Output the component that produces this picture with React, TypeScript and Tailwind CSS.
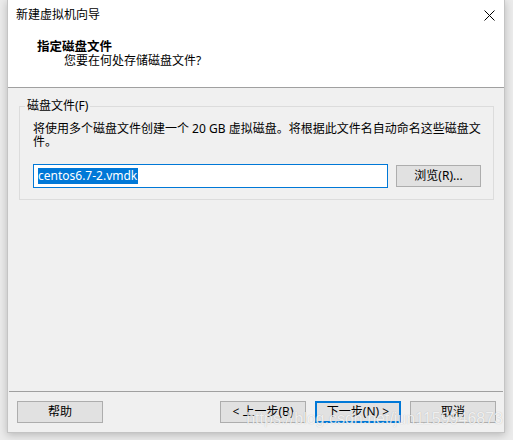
import React from 'react';

const font = { fontFamily: '"Noto Sans", "Noto Sans CJK SC", sans-serif' };

const Btn: React.FC<{ label: string; primary?: boolean }> = ({ label, primary }) => (
  <button
    className={
      primary
        ? 'w-[86px] h-[22px] bg-[#e1e1e1] border-2 border-[#0078d7] text-[12px] leading-none text-black flex items-center justify-center'
        : 'w-[86px] h-[22px] bg-[#e1e1e1] border border-[#adadad] text-[12px] leading-none text-black flex items-center justify-center'
    }
  >
    {label}
  </button>
);

export default function App() {
  return (
    <div className="w-[513px] h-[440px] bg-[#ebebeb] pl-[7px] overflow-hidden relative" style={font}>
      <div className="w-[498px] h-[433px] flex flex-col bg-[#f0f0f0] border-x border-b border-[#c4c4c4] shadow-[0_2px_8px_rgba(0,0,0,0.22)]">
        {/* title bar */}
        <div className="h-[30px] bg-white flex items-center justify-between pl-[8px] pr-[9px]">
          <span className="text-[12px] text-black">新建虚拟机向导</span>
          <svg width="11" height="11" viewBox="0 0 11 11" className="text-black">
            <path d="M0.5 0.5 L10.5 10.5 M10.5 0.5 L0.5 10.5" stroke="currentColor" strokeWidth="1" />
          </svg>
        </div>

        {/* header */}
        <div className="h-[58px] bg-white border-b border-[#a0a0a0] pt-[10px]">
          <div className="pl-[29px] text-[12.5px] leading-[14px] font-bold text-black">指定磁盘文件</div>
          <div className="pl-[56px] text-[12px] leading-[14px] text-black">您要在何处存储磁盘文件?</div>
        </div>

        {/* body */}
        <div className="flex-1 pt-[11px] px-[11px]">
          <fieldset className="border border-[#dcdcdc] pl-[13px] pr-[12px] pb-[11px]">
            <legend className="-ml-[8px] px-[2px] text-[12px] leading-[14px] text-black">磁盘文件(F)</legend>
            <p className="mt-[9px] text-[12px] leading-[13px] text-black">
              将使用多个磁盘文件创建一个 20 GB 虚拟磁盘。将根据此文件名自动命名这些磁盘文
              <br />
              件。
            </p>
            <div className="mt-[16px] flex items-center gap-[8px]">
              <div className="w-[355px] h-[24px] bg-white border border-[#0078d7] flex items-center pl-[4px]">
                <span className="bg-[#0078d7] text-white text-[12px] leading-[16px] pr-[1px]">centos6.7-2.vmdk</span>
              </div>
              <button className="w-[85px] h-[22px] bg-[#e1e1e1] border border-[#adadad] text-[12px] leading-none text-black flex items-center justify-center">
                浏览(R)...
              </button>
            </div>
          </fieldset>
        </div>

        {/* footer */}
        <div className="mx-px border-t border-[#a0a0a0] h-[41px] flex items-center pl-[8px] pr-[7px]">
          <Btn label="帮助" />
          <div className="flex-1" />
          <div className="flex gap-[9px]">
            <Btn label="< 上一步(B)" />
            <Btn label="下一步(N) >" primary />
            <Btn label="取消" />
          </div>
        </div>
      </div>

      {/* watermark */}
      <div
        className="absolute right-[10px] top-[407px] text-[16px] text-white/80 [text-shadow:0_0_1px_rgba(0,0,0,0.25)] pointer-events-none"
        style={{ fontFamily: '"Liberation Sans", Arial, sans-serif' }}
      >
        https://blog.csdn.net/jun1159946873
      </div>
    </div>
  );
}
